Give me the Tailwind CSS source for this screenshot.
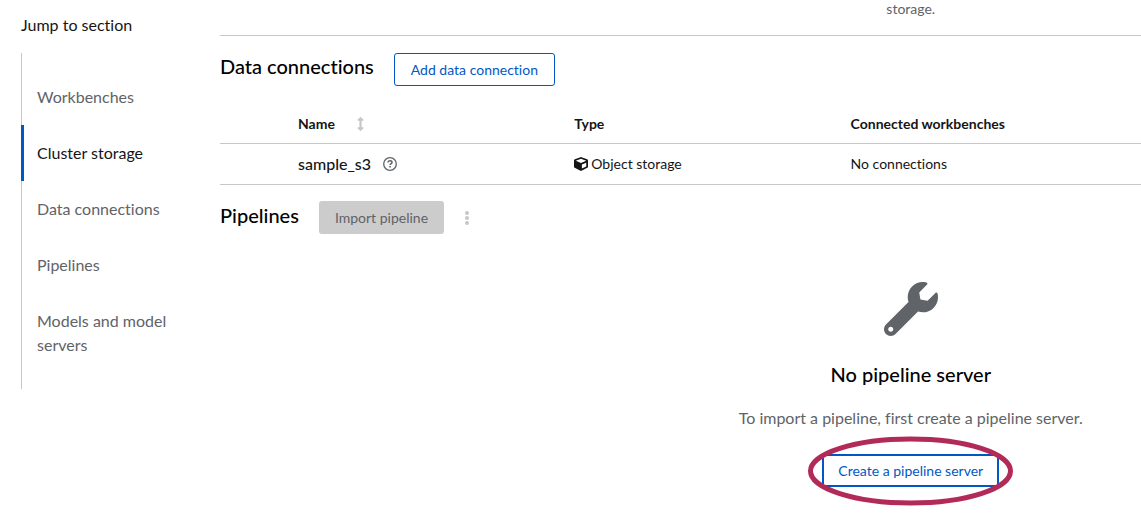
<!DOCTYPE html>
<html lang="en">
<head>
<meta charset="utf-8">
<title>Project details</title>
<script src="https://cdn.jsdelivr.net/npm/@tailwindcss/browser@4"></script>
</head>
<body class="flex gap-4 overflow-x-hidden bg-white pl-[21px] font-['Lato','Liberation_Sans',sans-serif] text-[#151515] [font-variant-ligatures:none]">
  <nav aria-labelledby="jump" class="w-[183px] shrink-0 pt-[13px] text-base">
    <h2 id="jump" class="mb-4">Jump to section</h2>
    <ul class="border-l border-[#c7c7c7] py-4 leading-6 text-[#606368]">
      <li><a href="#workbenches" class="block p-4 pl-[15px]">Workbenches</a></li>
      <li><a href="#storage" aria-current="true" class="-ml-px block border-l-3 border-[#0058c4] py-4 pr-4 pl-[13px] text-[#151515]">Cluster storage</a></li>
      <li><a href="#connections" class="block p-4 pl-[15px]">Data connections</a></li>
      <li><a href="#pipelines" class="block p-4 pl-[15px]">Pipelines</a></li>
      <li><a href="#models" class="block p-4 pl-[15px]">Models and model servers</a></li>
    </ul>
  </nav>

  <main class="min-w-0 flex-1">
    <div class="w-[150%]">
      <section id="storage" class="border-b border-[#c7c7c7] pb-[17px] text-center text-sm text-[#606368]">
        <p class="leading-[18px]">storage.</p>
      </section>

      <section id="connections" class="pt-[17px]">
        <div class="flex items-start gap-5">
          <h2 class="text-xl leading-[26px] font-medium text-black">Data connections</h2>
          <button class="h-[33px] rounded-[3px] border border-[#0058c4] px-4 text-sm text-[#0058c4]">Add data connection</button>
        </div>
        <table class="mt-5 w-full table-fixed text-left text-sm">
          <thead>
            <tr class="border-b border-[#c7c7c7]">
              <td class="w-[62px]"></td>
              <th class="w-1/5 px-4 pt-2 pb-[9px] font-bold">
                <button class="flex items-center gap-[22px]">Name
                  <svg class="h-3.5 w-[7px] fill-[#c7c7c7]" viewBox="0 0 256 512" aria-hidden="true"><path d="M214.059 377.941H168V134.059h46.059c21.382 0 32.09-25.851 16.971-40.971L144.971 7.029c-9.373-9.373-24.568-9.373-33.941 0L24.971 93.088c-15.119 15.119-4.411 40.971 16.971 40.971H88v243.882H41.941c-21.382 0-32.09 25.851-16.971 40.971l86.059 86.059c9.373 9.373 24.568 9.373 33.941 0l86.059-86.059c15.12-15.119 4.412-40.971-16.97-40.971z"/></svg>
                </button>
              </th>
              <th class="w-1/5 px-4 pt-2 pb-[9px] font-bold">Type</th>
              <th class="px-4 pt-2 pb-[9px] font-bold">Connected workbenches</th>
            </tr>
          </thead>
          <tbody>
            <tr class="border-b border-[#c7c7c7]">
              <td></td>
              <td class="h-[41px] px-4">
                <div class="flex items-center gap-3 text-base font-medium">sample_s3
                  <button aria-label="More information">
                    <svg class="block size-3.5" viewBox="0 0 14 14" fill="none" stroke="#606368" aria-hidden="true"><circle cx="7" cy="7" r="6.3" stroke-width="1.3"/><path d="M5 5.6C5 4.5 5.8 3.8 7 3.8s2 .7 2 1.6c0 1.3-1.9 1.3-1.9 2.7" stroke-width="1.5"/><path d="M7.1 9v1.6" stroke-width="1.6"/></svg>
                  </button>
                </div>
              </td>
              <td class="px-4">
                <div class="flex items-center gap-[3px]">
                  <svg class="size-3.5 fill-[#151515]" viewBox="0 0 512 512" aria-hidden="true"><path d="M239.1 6.3l-208 78c-18.7 7-31.1 25-31.1 45v225.1c0 18.2 10.3 34.8 26.5 42.9l208 104c13.5 6.8 29.4 6.8 42.9 0l208-104c16.3-8.1 26.5-24.8 26.5-42.9V129.3c0-20-12.4-37.9-31.1-44.9l-208-78C262 2.2 250 2.2 239.1 6.3zM256 68.4l192 72v1.1l-192 78-192-78v-1.1l192-72zm32 356V275.5l160-65v133.9l-160 80z"/></svg>
                  Object storage
                </div>
              </td>
              <td class="px-4">No connections</td>
            </tr>
          </tbody>
        </table>
      </section>

      <section id="pipelines" class="pt-4">
        <div class="flex items-start gap-5">
          <h2 class="text-xl font-medium text-black">Pipelines</h2>
          <button disabled class="h-[33px] rounded-[3px] bg-[#cccccc] px-4 text-sm text-[#606368]">Import pipeline</button>
          <button disabled aria-label="Pipeline actions" class="flex h-[33px] w-1.5 items-center justify-center">
            <svg class="h-3.5 w-1" viewBox="0 0 4 14" fill="#c7c7c7" aria-hidden="true"><circle cx="2" cy="2" r="2"/><circle cx="2" cy="7" r="2"/><circle cx="2" cy="12" r="2"/></svg>
          </button>
        </div>
        <div class="flex flex-col items-center pt-12 pb-7 text-center">
          <svg class="size-[54px] fill-[#606368]" viewBox="0 0 512 512" aria-hidden="true"><path d="M507.73 109.1c-2.24-9.03-13.54-12.09-20.12-5.51l-74.36 74.36-67.88-11.31-11.31-67.88 74.36-74.36c6.62-6.62 3.43-17.9-5.66-20.16-47.38-11.74-99.55.91-136.58 37.93-39.64 39.64-50.55 97.1-34.05 147.2L18.74 402.76c-24.99 24.99-24.99 65.51 0 90.5 24.99 24.99 65.51 24.99 90.5 0l213.21-213.21c50.12 16.71 107.47 5.68 147.37-34.22 37.07-37.07 49.7-89.32 37.91-136.73zM64 472c-13.25 0-24-10.75-24-24 0-13.26 10.75-24 24-24s24 10.74 24 24c0 13.25-10.75 24-24 24z"/></svg>
          <h3 class="mt-6 text-xl font-medium text-black">No pipeline server</h3>
          <p class="mt-[18px] text-base text-[#606368]">To import a pipeline, first create a pipeline server.</p>
          <div class="relative mt-6">
            <button class="h-[33px] border-2 border-[#0058c4] px-3.5 text-sm text-[#0058c4]">Create a pipeline server</button>
            <svg class="pointer-events-none absolute -top-[18px] left-1/2 h-[70px] w-[207px] -translate-x-1/2" viewBox="0 0 207 70" fill="none" aria-hidden="true"><ellipse cx="103" cy="35" rx="100" ry="32" stroke="#b12a58" stroke-width="5"/></svg>
          </div>
        </div>
      </section>
    </div>
  </main>
</body>
</html>
